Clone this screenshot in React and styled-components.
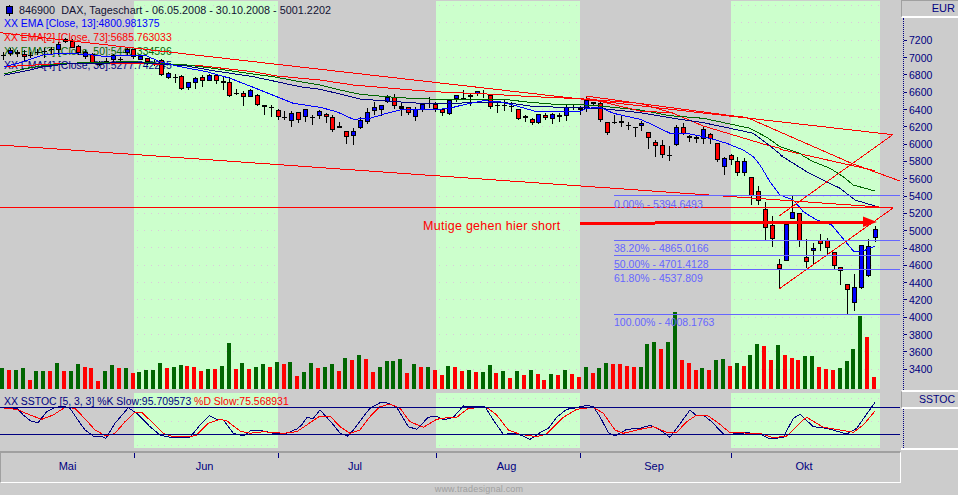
import React from "react";
import styled, { createGlobalStyle } from "styled-components";

const Global = createGlobalStyle`
  html, body { margin: 0; padding: 0; background: #cccccc; }
  #root { width: 958px; height: 495px; overflow: hidden; }
`;

const NAVY = "#000080";
const FONT = `"Liberation Sans", Arial, sans-serif`;

const Page = styled.div`
  width: 958px;
  height: 495px;
  background: #cccccc;
  font-family: ${FONT};
  display: flex;
  flex-direction: column;
  overflow: hidden;
`;
const Workspace = styled.div`
  display: flex;
  height: 483px;
`;
const ChartColumn = styled.div`
  width: 901px;
  display: flex;
  flex-direction: column;
`;
const MainPane = styled.div`
  position: relative;
  height: 389px;
`;
const StochPane = styled.div`
  position: relative;
  height: 62px;
`;
const PaneSvg = styled.svg`
  display: block;
`;
const OverlaySvg = styled.svg`
  display: block;
  position: absolute;
  left: 0;
  top: 0;
`;
const LegendStack = styled.div`
  position: absolute;
  top: 3px;
  left: 4px;
  display: flex;
  flex-direction: column;
`;
const LegendRow = styled.div`
  height: 14px;
  line-height: 14px;
  font-size: 10.45px;
  white-space: pre;
  color: ${(p) => p.$color};
  display: flex;
  align-items: center;
`;
const TitleRow = styled(LegendRow)`
  font-size: 10.8px;
  letter-spacing: 0.02px;
`;
const TitleIcon = styled.svg`
  width: 9px;
  height: 11px;
  margin: 0 5px 0 1px;
  flex: none;
`;
const StochLegend = styled.div`
  position: absolute;
  top: 6px;
  left: 4px;
  height: 14px;
  line-height: 14px;
  font-size: 10.45px;
  white-space: pre;
  color: ${NAVY};
`;
const RedText = styled.span`
  color: #ff0000;
`;
const Note = styled.div`
  position: absolute;
  left: ${(p) => p.$x}px;
  top: ${(p) => p.$y}px;
  height: 14px;
  line-height: 14px;
  white-space: pre;
  font-size: ${(p) => p.$size}px;
  letter-spacing: ${(p) => p.$ls || 0}px;
  color: ${(p) => p.$color};
`;
const TimeAxis = styled.div`
  height: 32px;
  box-sizing: border-box;
  border-top: 2px solid #a0a0a0;
  border-left: 1px solid #a0a0a0;
  border-bottom: 1px solid #ffffff;
  border-right: 1px solid #ffffff;
  display: flex;
`;
const MonthCell = styled.div`
  position: relative;
  box-sizing: border-box;
  width: ${(p) => p.$w}px;
  padding-right: ${(p) => p.$pad}px;
  flex: none;
  color: ${NAVY};
  font-size: 11px;
  text-align: center;
  line-height: 27px;
  &::before {
    content: "";
    display: ${(p) => (p.$tick ? "block" : "none")};
    position: absolute;
    left: 0;
    top: 0;
    width: 1px;
    height: 5px;
    background: ${NAVY};
  }
`;
const AxisColumn = styled.div`
  width: 57px;
  display: flex;
  flex-direction: column;
`;
const AxisHead = styled.div`
  box-sizing: border-box;
  height: ${(p) => p.$h}px;
  border-top: ${(p) => p.$top};
  border-left: 1px solid #a0a0a0;
  border-bottom: 2px solid #ffffff;
  text-align: right;
  padding-right: 3px;
  color: ${NAVY};
  font-size: ${(p) => p.$size}px;
  line-height: 15px;
`;
const AxisScale = styled.div`
  box-sizing: border-box;
  height: ${(p) => p.$h}px;
  margin-left: 2px;
  padding-top: ${(p) => p.$pt || 0}px;
  border-left: 1px dotted ${NAVY};
  display: flex;
  flex-direction: column;
`;
const AxisFoot = styled.div`
  height: 2px;
  background: #ffffff;
`;
const TickRow = styled.div`
  height: 17.32px;
  flex: none;
  display: flex;
  align-items: center;
  color: ${NAVY};
  font-size: 10.5px;
`;
const TickMark = styled.span`
  width: 3px;
  height: 1px;
  background: ${NAVY};
  margin-right: 2px;
  flex: none;
`;
const Watermark = styled.div`
  height: 12px;
  line-height: 13px;
  text-align: center;
  color: #a0a0a0;
  font-size: 9px;
  letter-spacing: 0.02em;
`;

/* chart data: y values in 3x zoom pixels, [kind, wickTop, bodyTop, bodyBottom, wickBottom] */
const C = [
["d",155,165,165,180],["b",145,150,162,170],["b",150,155,162,170],["r",150,163,172,185],["d",155,165,165,172],
["d",148,155,155,165],["d",145,152,152,175],["d",140,148,148,160],["b",125,132,150,165],["b",115,118,128,130],
["r",118,123,143,146],["r",135,138,158,165],["b",150,155,170,178],["r",160,162,188,192],["b",183,185,195,198],
["d",175,183,183,192],["b",162,165,180,190],["d",170,178,178,190],["b",145,148,160,165],["r",146,148,172,175],
["b",166,168,180,182],["r",173,175,188,195],["d",178,188,188,200],["r",178,180,225,228],["b",215,218,232,237],
["d",222,230,230,248],["r",226,228,267,270],["b",245,247,265,268],["b",232,235,250,268],["r",225,232,245,262],
["b",222,225,242,244],["r",225,226,245,252],["b",230,243,250,270],["r",232,245,287,292],["d",268,280,280,286],
["r",272,280,292,318],["b",268,270,290,292],["r",282,284,315,318],["r",314,316,322,345],["d",316,322,322,352],
["r",328,330,350,362],["d",332,350,350,358],["b",332,340,365,380],["r",335,337,362,368],["b",326,328,352,365],
["d",345,350,350,375],["b",330,332,346,358],
["r",340,343,353,370],["r",345,352,392,395],["k",366,378,385,385],["r",392,392,410,432],["b",385,392,407,435],
["b",350,360,385,385],["b",325,335,365,372],["b",305,322,335,345],["b",316,316,332,350],["b",285,292,308,310],
["r",282,292,320,326],["k",305,318,326,348],["r",320,322,340,345],["b",322,328,352,365],["b",312,312,330,335],
["d",292,308,308,325],["r",305,312,328,336],["r",328,328,340,350],["b",296,300,342,344],["b",285,286,298,305],
["d",270,293,293,298],["b",280,286,293,318],["b",274,274,284,290],["d",270,278,278,295],["r",285,286,323,326],
["d",305,315,315,338],["d",300,314,314,333],["d",305,318,318,335],["r",328,328,359,362],["k",345,349,356,365],
["r",354,358,371,376],["b",343,343,371,373],["r",340,346,356,360],["b",340,343,359,372],["k",340,346,350,368],
["b",313,322,349,365],["d",312,322,322,330],["b",318,323,330,345],["b",290,300,326,335],["k",305,306,311,318],
["r",305,308,359,365],["r",367,367,401,407],["d",345,365,365,372],["r",348,364,371,380],["d",367,375,375,392],
["d",380,382,382,410],
["b",362,370,380,392],["r",397,397,416,447],["r",420,427,440,470],["r",420,436,465,475],["d",438,465,465,483],
["b",375,382,436,438],["r",368,382,403,405],["r",405,408,415,425],["r",405,412,418,428],["b",380,388,418,432],
["r",400,401,415,432],["r",428,430,482,484],["b",470,475,503,523],["r",462,466,482,495],["r",470,483,520,527],
["b",475,483,520,530],["r",532,532,590,615],["r",558,573,603,615],["r",607,628,685,725],["r",647,676,719,740],
["r",778,793,807,867],["b",672,672,782,782],["b",587,636,657,657],["r",640,640,725,743],["r",718,772,788,805],
["b",729,745,753,795],["r",703,720,733,753],["r",713,721,745,760],["r",755,757,799,805],["r",800,802,814,855],
["r",853,853,871,942],["b",823,862,910,933],["b",735,735,865,867],["b",717,739,829,830],["b",678,688,715,727],
];
const VOL = [
[114,"g"],[120,"r"],[120,"g"],[114,"g"],[150,"r"],[123,"g"],[123,"g"],[123,"r"],[99,"g"],[123,"r"],[123,"g"],[102,"g"],
[111,"r"],[114,"r"],[153,"r"],[123,"g"],[105,"g"],[114,"r"],[114,"g"],[129,"r"],[126,"g"],[120,"g"],[120,"g"],[99,"g"],
[114,"r"],[111,"g"],[105,"g"],[108,"r"],[111,"r"],[123,"r"],[117,"g"],[117,"r"],[108,"g"],[39,"g"],[117,"r"],[99,"g"],
[117,"r"],[111,"g"],[102,"g"],[111,"r"],[96,"g"],[102,"r"],[96,"g"],[138,"r"],[126,"g"],[99,"g"],[114,"r"],
[111,"g"],[102,"g"],[123,"r"],[84,"g"],[90,"r"],[75,"g"],[87,"r"],[126,"r"],[111,"g"],[93,"g"],[93,"g"],[87,"g"],[129,"r"],
[102,"g"],[111,"r"],[111,"g"],[120,"r"],[135,"r"],[108,"g"],[111,"r"],[123,"r"],[120,"g"],[126,"r"],[126,"g"],[105,"g"],
[129,"r"],[123,"g"],[144,"r"],[123,"g"],[135,"r"],[120,"g"],[132,"r"],[150,"r"],[132,"g"],[135,"r"],[120,"g"],[132,"r"],
[141,"r"],[111,"g"],[129,"r"],[114,"g"],[99,"g"],[102,"r"],[102,"r"],[108,"r"],[111,"r"],
[111,"g"],[42,"g"],[36,"g"],[57,"r"],[36,"g"],[-54,"g"],[90,"r"],[99,"r"],[120,"r"],[114,"g"],[120,"r"],[90,"g"],[87,"g"],
[108,"r"],[99,"g"],[108,"r"],[75,"g"],[42,"g"],[48,"r"],[90,"r"],[45,"g"],[75,"r"],[84,"r"],[90,"r"],[78,"g"],[78,"g"],
[111,"r"],[117,"r"],[120,"r"],[114,"g"],[93,"g"],[57,"g"],[-42,"g"],[21,"r"],[141,"r"],
];
const STEP = 6.865;
const cx = (i) => Math.floor(3.43 + STEP * i);
const vx = (i) => Math.round(0.14 + STEP * i);

const seg = (ox, oy, arr) => arr.map(([x, y]) => [ox + x / 3, oy + y / 3]);
const pts = (a) => a.map(([x, y]) => `${x.toFixed(1)},${y.toFixed(1)}`).join(" ");

const EMA_BLUE = [
  ...seg(0,0,[[12,200],[60,188],[130,165],[180,160],[260,163],[320,170],[380,165],[440,168],[480,185],[540,200],[620,215],[690,235],[760,262],[830,290],[880,310],[960,322]]),
  ...seg(320,0,[[50,335],[100,358],[150,355],[200,340],[240,330],[300,328],[360,328],[400,322],[440,312],[490,302],[540,305],[590,318],[650,335],[700,335],[780,335],[800,325],[840,322],[880,340],[960,358]]),
  ...seg(640,0,[[40,375],[90,400],[150,402],[180,408],[220,418],[260,430],[310,450],[340,470]]),
  ...seg(640,165,[[360,0],[390,50],[420,90],[460,105],[490,140],[530,165],[575,180],[640,258],[670,258],[705,243]]),
];
const EMA_GREEN = [
  ...seg(0,0,[[12,222],[80,205],[130,197],[200,190],[300,187],[400,185],[480,190],[560,195],[640,205],[760,222],[830,232],[900,245],[960,255]]),
  ...seg(320,0,[[60,270],[120,283],[200,290],[270,295],[350,298],[450,298],[550,298],[630,307],[720,314],[780,314],[840,318],[960,330]]),
  ...seg(640,0,[[90,347],[190,355],[270,372],[330,385],[380,412],[420,440],[480,460]]),
  ...seg(780,120,[[70,108],[100,125],[150,145],[190,170],[220,195],[285,213]]),
];
const EMA_NAVY = [
  ...seg(0,0,[[12,226],[80,212],[130,200],[200,192],[300,190],[400,187],[480,192],[560,198],[640,212],[760,230],[830,245],[900,260],[960,268]]),
  ...seg(320,0,[[60,282],[120,297],[200,303],[270,308],[350,312],[450,308],[550,307],[630,318],[720,322],[780,323],[840,325],[960,338]]),
  ...seg(640,0,[[100,355],[190,368],[270,385],[340,400],[380,430],[430,470]]),
  ...seg(780,120,[[0,105],[80,155],[140,185],[180,205],[225,240],[285,258]]),
];
const EMA_RED = [
  ...seg(0,0,[[12,200],[200,190],[400,190],[600,197],[760,215],[830,228],[960,240]]),
  ...seg(320,0,[[100,255],[250,268],[340,275],[500,282],[640,290],[780,296],[960,310]]),
  ...seg(640,0,[[100,340],[190,378],[270,402],[380,435],[420,445]]),
  ...seg(780,120,[[0,88],[285,152]]),
];
const STRAIGHTS = [
  [[0,32.7],[893,134.7]],
  [[0,145],[893,208]],
  [[0,207.5],[893,207.5]],
  [[779,216],[893,134.5]],
  [[779,289],[893,208]],
  [[586,96],[640,103.5],[730,115.5],[747,117.5],[852,163.5],[900,181]],
  [[586,98],[640,111],[673,113]],
];
const FIBS = [195.5, 240.5, 255.5, 269.5, 314.5];
const BANDS = [[134,278],[436,580],[731,880]];

const dotPath = (rows) => {
  let d = "";
  BANDS.forEach(([a, b]) => {
    for (let x = a + 3; x < b; x += STEP) {
      rows.forEach((y) => {
        d += `M${Math.round(x)} ${Math.round(y)}h1v1h-1z`;
      });
    }
  });
  return d;
};
const mainRows = Array.from({ length: 22 }, (_, k) => 5 + 17.32 * k);

const Candle = ({ i, d }) => {
  const [kind, wt, bt, bb, wb] = d;
  const x = cx(i);
  const wT = wt / 3, bT = bt / 3, bB = bb / 3, wB = wb / 3;
  const fill = kind === "b" ? "#0000ff" : kind === "r" ? "#ff0000" : "#000000";
  return (
    <g>
      <rect x={x} y={Math.round(wT)} width="1" height={Math.max(1, Math.round(wB - wT))} fill="#000" />
      {kind === "d" ? (
        <rect x={x - 2} y={Math.round(bT)} width="5" height="1" fill="#000" />
      ) : (
        <rect x={x - 1.5} y={Math.round(bT) + 0.5} width="4" height={Math.max(1, Math.round(bB - bT) - 1)} fill={fill} stroke="#000" strokeWidth="1" />
      )}
    </g>
  );
};

const Line = ({ p, c, w = 1 }) => (
  <polyline points={pts(p)} fill="none" stroke={c} strokeWidth={w} shapeRendering="crispEdges" />
);

const MainBands = () => (
  <PaneSvg width="901" height="389" viewBox="0 0 901 389">
    {BANDS.map(([a, b]) => (
      <rect key={a} x={a} y="1" width={b - a} height="388" fill="#ccffcc" />
    ))}
    <path d={dotPath(mainRows)} fill="#dcc8dc" />
  </PaneSvg>
);

const MainPlot = () => (
  <OverlaySvg width="901" height="389" viewBox="0 0 901 389">
    <g shapeRendering="crispEdges">
      {VOL.map(([t, k], i) => {
        const top = Math.round(330 + t / 3);
        return <rect key={i} x={vx(i)} y={top} width="4" height={389 - top} fill={k === "g" ? "#006600" : "#ff0000"} />;
      })}
      {C.map((d, i) => <Candle key={i} i={i} d={d} />)}
    </g>
    <Line p={EMA_RED} c="#ff0000" />
    <Line p={EMA_GREEN} c="#006600" />
    <Line p={EMA_NAVY} c="#000080" />
    <Line p={EMA_BLUE} c="#0000ff" />
    {STRAIGHTS.map((p, i) => <Line key={i} p={p} c="#ff0000" />)}
    {FIBS.map((y) => (
      <line key={y} x1="614" x2="900" y1={y} y2={y} stroke="#6666ff" strokeWidth="1" shapeRendering="crispEdges" />
    ))}
    <g shapeRendering="crispEdges">
      <rect x="580" y="222" width="75" height="3" fill="#ff0000" />
      <rect x="655" y="220.5" width="212" height="3" fill="#ff0000" />
    </g>
    <polygon points="863,216.5 877,222 863,227" fill="#ff0000" />
  </OverlaySvg>
);

const KLINE = [
  ...seg(0,0,[[12,232],[50,235],[70,255],[95,275],[115,277],[140,245],[165,233],[190,228],[210,235],[230,265],[255,300],[280,318],[300,318],[318,325],[345,280],[385,233],[410,250],[450,290],[480,315],[510,322],[570,322],[600,285],[628,257],[650,268],[670,270],[700,310],[730,318],[755,300],[790,303],[830,312],[860,310],[890,297],[905,285],[920,263],[940,265],[960,240]]),
  ...seg(320,0,[[20,262],[45,290],[60,310],[82,318],[100,300],[130,260],[150,235],[180,218],[200,218],[230,232],[265,290],[290,298],[325,262],[350,258],[370,270],[400,262],[430,228],[495,230],[520,270],[550,313],[590,310],[630,328],[660,308],[685,295],[710,262],[740,238],[770,233],[800,226],[820,230],[840,260],[865,308],[885,318],[920,298],[960,295]]),
  ...seg(640,0,[[30,286],[60,300],[90,322],[110,295],[150,240],[170,258],[190,255],[215,275],[250,312],[280,312],[320,308],[360,312],[390,327],[430,322],[460,265],[480,253],[520,290],[560,295],[620,312],[650,295],[705,217]]),
];
const DLINE = [
  ...seg(0,0,[[12,235],[50,238],[90,255],[125,268],[160,255],[195,232],[225,235],[260,272],[285,300],[318,318],[345,310],[375,275],[405,247],[425,247],[460,280],[490,310],[520,320],[570,320],[590,315],[625,280],[660,268],[680,272],[720,303],[750,310],[790,305],[850,310],[890,305],[920,285],[960,258]]),
  ...seg(320,0,[[30,258],[60,290],[90,310],[120,300],[150,260],[180,230],[210,222],[240,235],[270,275],[310,292],[350,268],[380,263],[410,262],[445,235],[500,232],[530,255],[565,300],[600,313],[650,320],[680,312],[730,262],[770,238],[820,232],[850,250],[885,300],[910,310],[960,298]]),
  ...seg(640,0,[[40,290],[80,307],[110,307],[140,275],[170,255],[200,255],[230,275],[270,308],[360,310],[400,323],[440,318],[490,270],[500,262],[550,292],[640,307],[670,285],[705,243]]),
];
const shift = (a) => a.map(([x, y]) => [x, 330 + y - 389]);
const stochRows = [398.3 - 389, 421.3 - 389, 445 - 389];

const StochChart = () => (
  <PaneSvg width="901" height="62" viewBox="0 0 901 62">
    {BANDS.map(([a, b]) => (
      <rect key={a} x={a} y="4" width={b - a} height="55" fill="#ccffcc" />
    ))}
    <path d={dotPath(stochRows)} fill="#dcc8dc" />
    <Line p={shift(KLINE)} c="#000080" />
    <Line p={shift(DLINE)} c="#ff0000" />
    <g shapeRendering="crispEdges">
      <line x1="0" x2="900" y1="18.5" y2="18.5" stroke="#000080" />
      <line x1="0" x2="900" y1="45.5" y2="45.5" stroke="#000080" />
    </g>
  </PaneSvg>
);

const PRICES = [7200,7000,6800,6600,6400,6200,6000,5800,5600,5400,5200,5000,4800,4600,4400,4200,4000,3800,3600,3400];
const MONTHS = [["Mai",133,false,0],["Jun",144,true,3],["Jul",158,true,4],["Aug",144,true,3],["Sep",151,true,3],["Okt",146,true,0]];
const NOTES = [
  ["0.00% - 5394.6493", 197],
  ["38.20% - 4865.0166", 241],
  ["50.00% - 4701.4128", 256.5],
  ["61.80% - 4537.809", 270.5],
  ["100.00% - 4008.1763", 315],
];

export default function App() {
  return (
    <Page>
      <Global />
      <Workspace>
        <ChartColumn>
          <MainPane>
            <MainBands />
            <LegendStack>
              <TitleRow $color="#111133">
                <TitleIcon viewBox="0 0 9 11">
                  <rect x="4" y="0" width="1" height="11" fill="#000" />
                  <rect x="1.5" y="1.5" width="6" height="7" fill="#0000cc" stroke="#000" />
                </TitleIcon>
                {"846900  DAX, Tageschart - 06.05.2008 - 30.10.2008 - 5001.2202"}
              </TitleRow>
              <LegendRow $color="#0000ff">XX EMA [Close, 13]:4800.981375</LegendRow>
              <LegendRow $color="#ff0000">XX EMA[2] [Close, 73]:5685.763033</LegendRow>
              <LegendRow $color="#006600">XX EMA[3] [Close, 50]:5440.334596</LegendRow>
              <LegendRow $color="#000080">XX EMA[4] [Close, 38]:5277.742245</LegendRow>
            </LegendStack>
            <MainPlot />
            {NOTES.map(([t, y]) => (
              <Note key={t} $x={614} $y={y} $size={10.5} $color="#6666ff">{t}</Note>
            ))}
            <Note $x={423} $y={219} $size={12.5} $ls={0.27} $color="#ff0000">Mutige gehen hier short</Note>
          </MainPane>
          <StochPane>
            <StochChart />
            <StochLegend>
              XX SSTOC [5, 3, 3] %K Slow:95.709573 <RedText>%D Slow:75.568931</RedText>
            </StochLegend>
          </StochPane>
          <TimeAxis>
            {MONTHS.map(([m, w, t, pad]) => (
              <MonthCell key={m} $w={w} $tick={t} $pad={pad}>{m}</MonthCell>
            ))}
          </TimeAxis>
        </ChartColumn>
        <AxisColumn>
          <AxisHead $h={18} $size={11} $top="1px solid #a0a0a0">EUR</AxisHead>
          <AxisScale $h={372} $pt={13.6}>
            {PRICES.map((p) => (
              <TickRow key={p}>
                <TickMark />
                {p}
              </TickRow>
            ))}
          </AxisScale>
          <AxisHead $h={19} $size={10.5} $top="2px solid #ffffff">SSTOC</AxisHead>
          <AxisScale $h={39} />
          <AxisFoot />
        </AxisColumn>
      </Workspace>
      <Watermark>www.tradesignal.com</Watermark>
    </Page>
  );
}
